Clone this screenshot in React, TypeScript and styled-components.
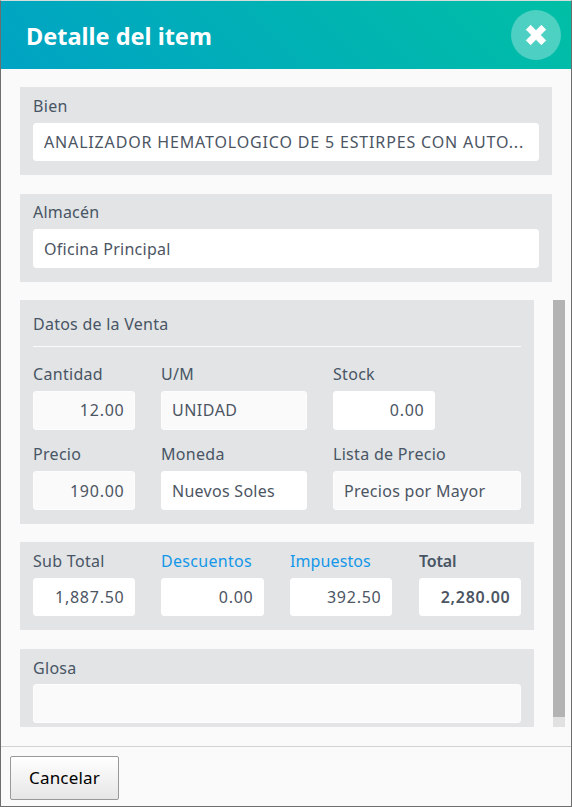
import React from 'react';
import styled, { createGlobalStyle } from 'styled-components';

const GlobalStyle = createGlobalStyle`
  * { box-sizing: border-box; }
  body { margin: 0; background: #fafafa; }
`;

const Dialog = styled.div`
  width: 572px;
  height: 807px;
  display: flex;
  flex-direction: column;
  overflow: hidden;
  background: #fafafa;
  border: 1px solid #6d6d6d;
  border-top-color: #d5dcdc;
  font-family: 'Noto Sans', 'Open Sans', sans-serif;
  font-size: 16px;
  color: #485564;
`;

const Header = styled.header`
  flex: none;
  height: 68px;
  padding: 0 10px 0 25px;
  display: flex;
  align-items: center;
  justify-content: space-between;
  background: linear-gradient(45deg, #00a3c4, #00bfa5);
`;

const Title = styled.h1`
  margin: 2px 0 0;
  font-size: 23.5px;
  line-height: 32px;
  font-weight: 700;
  color: #fff;
`;

const CloseButton = styled.button`
  width: 50px;
  height: 50px;
  padding: 0;
  border: 0;
  border-radius: 50%;
  display: grid;
  place-items: center;
  background: rgba(255, 255, 255, 0.3);
`;

const Body = styled.main`
  flex: none;
  height: 677px;
  padding: 18px 6px 0 19px;
  display: flex;
  flex-direction: column;
`;

const Panel = styled.section<{ $height?: number; $gap: number; $pad?: number }>`
  flex: none;
  width: 100%;
  height: ${(p) => p.$height ?? 88}px;
  margin-bottom: ${(p) => p.$gap}px;
  padding: ${(p) => p.$pad ?? 8}px 13px 0;
  background: #e2e4e6;
`;

const Fixed = styled.div`
  width: 532px;
`;

const Scroller = styled.div`
  display: flex;
  justify-content: space-between;
  height: 427px;
`;

const ScrollContent = styled.div`
  width: 514px;
  height: 427px;
  overflow: hidden;
`;

const Track = styled.div`
  width: 12px;
  background: #e1e1e1;
`;

const Thumb = styled.div`
  height: 417px;
  background: #b3b3b3;
`;

const PanelTitle = styled.h2`
  margin: 0 0 16px;
  height: 34px;
  border-bottom: 1px solid #fafafa;
  font-size: 16px;
  line-height: 22px;
  font-weight: 400;
  letter-spacing: 0.25px;
`;

const SaleGrid = styled.div`
  display: grid;
  grid-template-columns: 102px 146px 188px;
  column-gap: 26px;
  row-gap: 13px;
`;

const TotalsGrid = styled.div`
  display: grid;
  grid-template-columns: 102px 103px 103px 102px;
  column-gap: 26px;
`;

const FieldBox = styled.label<{ $narrow?: boolean }>`
  display: block;
  width: ${(p) => (p.$narrow ? '102px' : 'auto')};
`;

const Caption = styled.span<{ $link?: boolean; $strong?: boolean; $inset: number; $tracking: number }>`
  display: block;
  height: ${(p) => p.$inset}px;
  line-height: 22px;
  letter-spacing: ${(p) => p.$tracking}px;
  color: ${(p) => (p.$link ? '#1497e8' : 'inherit')};
  font-weight: ${(p) => (p.$strong ? 600 : 400)};
`;

const Value = styled.span<{
  $muted?: boolean;
  $number?: boolean;
  $strong?: boolean;
  $height: number;
  $line: number;
  $spacing: number;
}>`
  display: block;
  height: ${(p) => p.$height}px;
  padding: 0 ${(p) => (p.$number ? 9.5 : 11)}px 0 10px;
  border: 1px solid ${(p) => (p.$muted ? '#fdfdfd' : '#fff')};
  border-radius: 3px;
  background: ${(p) => (p.$muted ? '#fafafa' : '#fff')};
  line-height: ${(p) => p.$line}px;
  letter-spacing: ${(p) => p.$spacing}px;
  text-align: ${(p) => (p.$number ? 'right' : 'left')};
  white-space: nowrap;
  color: #4c5563;
  font-weight: ${(p) => (p.$strong ? 600 : 400)};
`;

const Footer = styled.footer`
  flex: 1;
  padding: 9px;
  border-top: 1px solid #d2d2d2;
`;

const CancelButton = styled.button`
  display: block;
  width: 109px;
  height: 44px;
  padding: 0 0 2px;
  border: 1px solid #999;
  border-radius: 2px;
  background: linear-gradient(#fff, #e6e6e6);
  font: 17px 'Noto Sans', 'Open Sans', sans-serif;
  letter-spacing: 0.2px;
  color: #000;
`;

type FieldProps = {
  label: string;
  value?: string;
  number?: boolean;
  muted?: boolean;
  strong?: boolean;
  link?: boolean;
  narrow?: boolean;
  height?: number;
  line?: number;
  inset?: number;
  tracking?: number;
  spacing?: number;
};

function Field({
  label,
  value = '',
  number,
  muted,
  strong,
  link,
  narrow,
  height = 39,
  line = height - 1,
  inset = 28,
  tracking = 0.3,
  spacing = number ? 0.75 : 0.28,
}: FieldProps) {
  return (
    <FieldBox $narrow={narrow}>
      <Caption $link={link} $strong={strong} $inset={inset} $tracking={tracking}>
        {label}
      </Caption>
      <Value $muted={muted} $number={number} $strong={strong} $height={height} $line={line} $spacing={spacing}>
        {value}
      </Value>
    </FieldBox>
  );
}

export default function App() {
  return (
    <>
      <GlobalStyle />
      <Dialog>
        <Header>
          <Title>Detalle del item</Title>
          <CloseButton aria-label="Cerrar">
            <svg width="22" height="22" viewBox="0 0 22 22">
              <path
                d="M5.6 1.3 11 6.7l5.4-5.4 4.3 4.3L15.3 11l5.4 5.4-4.3 4.3L11 15.3l-5.4 5.4-4.3-4.3L6.7 11 1.3 5.6z"
                fill="#fff"
                stroke="#fff"
                strokeWidth="1"
                strokeLinejoin="round"
              />
            </svg>
          </CloseButton>
        </Header>
        <Body>
          <Fixed>
            <Panel $gap={19}>
              <Field label="Bien" value="ANALIZADOR HEMATOLOGICO DE 5 ESTIRPES CON AUTO..." height={38} spacing={0.84} />
            </Panel>
            <Panel $gap={18} $pad={7}>
              <Field label="Almacén" value="Oficina Principal" tracking={0.2} />
            </Panel>
          </Fixed>
          <Scroller>
            <ScrollContent>
              <Panel $height={224} $gap={18} $pad={13}>
                <PanelTitle>Datos de la Venta</PanelTitle>
                <SaleGrid>
                  <Field label="Cantidad" value="12.00" number muted line={36} />
                  <Field label="U/M" value="UNIDAD" muted line={36} spacing={0.5} />
                  <Field label="Stock" value="0.00" number narrow line={36} />
                  <Field label="Precio" value="190.00" number muted />
                  <Field label="Moneda" value="Nuevos Soles" />
                  <Field label="Lista de Precio" value="Precios por Mayor" muted />
                </SaleGrid>
              </Panel>
              <Panel $gap={19}>
                <TotalsGrid>
                  <Field label="Sub Total" value="1,887.50" number height={38} />
                  <Field label="Descuentos" value="0.00" number link height={38} />
                  <Field label="Impuestos" value="392.50" number link narrow height={38} tracking={0.1} />
                  <Field label="Total" value="2,280.00" number strong height={38} tracking={-0.2} />
                </TotalsGrid>
              </Panel>
              <Panel $gap={0}>
                <Field label="Glosa" muted inset={27} />
              </Panel>
            </ScrollContent>
            <Track>
              <Thumb />
            </Track>
          </Scroller>
        </Body>
        <Footer>
          <CancelButton>Cancelar</CancelButton>
        </Footer>
      </Dialog>
    </>
  );
}
